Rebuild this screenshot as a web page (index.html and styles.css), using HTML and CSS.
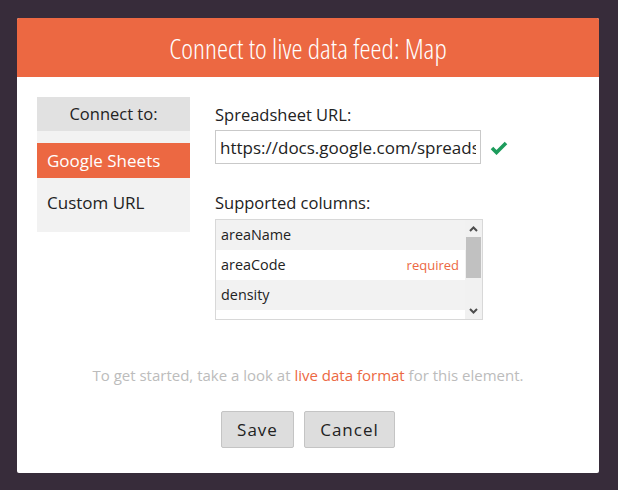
FILE: index.html
```html
<!DOCTYPE html>
<html>
<head>
<meta charset="utf-8">
<link rel="stylesheet" href="styles.css">
</head>
<body>
<div class="modal">
  <div class="header"><h1 class="title">Connect to live data feed: Map</h1></div>
  <div class="content">
    <div class="main">
      <div class="side">
        <div class="side-head">Connect to:</div>
        <div class="side-list">
          <div class="side-item active">Google Sheets</div>
          <div class="side-item second">Custom URL</div>
        </div>
      </div>
      <div class="form">
        <div class="label">Spreadsheet URL:</div>
        <div class="url-row">
          <input class="url" type="text" value="https://docs.google.com/spreadsheets/d/1aB2cD3eF4gH5iJ6">
          <svg class="check" width="18" height="15" viewBox="0 0 18 15"><path d="M2 8 L6.5 12.5 L16 3" fill="none" stroke="#1d9c5c" stroke-width="3.6" stroke-linecap="butt" stroke-linejoin="miter"/></svg>
        </div>
        <div class="label label2">Supported columns:</div>
        <div class="cols">
          <div class="cols-list">
            <div class="col-row"><span>areaName</span></div>
            <div class="col-row"><span>areaCode</span><span class="req">required</span></div>
            <div class="col-row"><span>density</span></div>
            <div class="col-row"></div>
          </div>
          <div class="scrollbar">
            <div class="sb-btn"><svg width="9" height="6" viewBox="0 0 9 6"><path d="M1 5 L4.5 1.5 L8 5" fill="none" stroke="#4d4d4d" stroke-width="2"/></svg></div>
            <div class="sb-thumb"></div>
            <div class="sb-space"></div>
            <div class="sb-btn"><svg width="9" height="6" viewBox="0 0 9 6"><path d="M1 1 L4.5 4.5 L8 1" fill="none" stroke="#4d4d4d" stroke-width="2"/></svg></div>
          </div>
        </div>
      </div>
    </div>
    <p class="hint">To get started, take a look at <a class="link" href="#">live data format</a> for this element.</p>
    <div class="buttons">
      <button class="btn save">Save</button>
      <button class="btn cancel">Cancel</button>
    </div>
  </div>
</div>
</body>
</html>
```
FILE: styles.css
```css
html, body {
  margin: 0;
  padding: 0;
}
body {
  background: #372c3a;
  width: 618px;
  height: 490px;
  overflow: hidden;
  font-family: "Open Sans", "DejaVu Sans", sans-serif;
  color: #222;
}
.modal {
  margin: 18px 0 0 17px;
  width: 582px;
  height: 455px;
  background: #fff;
  border-radius: 2px;
  overflow: hidden;
}
.header {
  height: 59px;
  background: #ec6842;
  display: flex;
  align-items: center;
  justify-content: center;
}
.title {
  margin: 0;
  font-family: "Open Sans", sans-serif;
  font-weight: 300;
  font-stretch: 75%;
  font-size: 28px;
  line-height: 36px;
  color: #fff;
}
.content {
  padding: 20px 20px 0 20px;
}
.main {
  display: flex;
  gap: 25px;
  height: 223px;
}
.side {
  width: 153px;
  align-self: flex-start;
}
.side-head {
  height: 34px;
  line-height: 34px;
  background: #e1e1e1;
  text-align: center;
  font-size: 16.5px;
  color: #222;
}
.side-list {
  background: #f2f2f2;
  padding: 12px 0 12px;
}
.side-item {
  height: 35px;
  line-height: 35px;
  padding-left: 10px;
  font-size: 17px;
  color: #222;
}
.side-item.active {
  background: #ec6842;
  color: #fff;
}
.side-item.second {
  margin-top: 7px;
}
.form {
  width: 268px;
  padding-top: 7px;
}
.label {
  font-size: 16.5px;
  line-height: 22px;
  color: #222;
  margin-bottom: 4px;
}
.label2 {
  margin-top: 28px;
  margin-bottom: 5px;
}
.url-row {
  display: flex;
  align-items: center;
  gap: 9px;
}
.url {
  box-sizing: border-box;
  width: 266px;
  height: 34px;
  border: 1px solid #c9c9c9;
  padding: 0 4px;
  margin: 0;
  font-family: "Open Sans", sans-serif;
  font-size: 17px;
  color: #222;
  outline: none;
  flex: none;
}
.check {
  flex: none;
}
.cols {
  box-sizing: border-box;
  width: 268px;
  height: 101px;
  border: 1px solid #d8d8d8;
  display: flex;
  overflow: hidden;
}
.cols-list {
  flex: 1;
  overflow: hidden;
}
.col-row {
  height: 30px;
  line-height: 30px;
  padding: 0 6px 0 5px;
  display: flex;
  justify-content: space-between;
  font-size: 14.4px;
  color: #222;
  background: #fff;
}
.col-row:nth-child(odd) {
  background: #f2f2f2;
}
.req {
  color: #ec6842;
  font-size: 13px;
}
.scrollbar {
  width: 17px;
  background: #f1f1f1;
  display: flex;
  flex-direction: column;
}
.sb-btn {
  height: 17px;
  display: flex;
  align-items: center;
  justify-content: center;
}
.sb-thumb {
  height: 41px;
  margin: 0 1px;
  background: #c1c1c1;
}
.sb-space {
  flex: 1;
}
.hint {
  margin: 0;
  margin-top: 45px;
  text-align: center;
  font-size: 15px;
  line-height: 20px;
  color: #bcbcbc;
}
.link {
  color: #ec6842;
  text-decoration: none;
}
.buttons {
  display: flex;
  justify-content: center;
  gap: 10px;
  margin-top: 26px;
}
.btn {
  height: 37px;
  background: #dddddd;
  border: 1px solid #c4c4c4;
  border-radius: 2px;
  font-family: "Open Sans", sans-serif;
  font-size: 17px;
  letter-spacing: 1px;
  color: #222;
  padding: 0;
}
.save {
  width: 73px;
}
.cancel {
  width: 91px;
}
```
